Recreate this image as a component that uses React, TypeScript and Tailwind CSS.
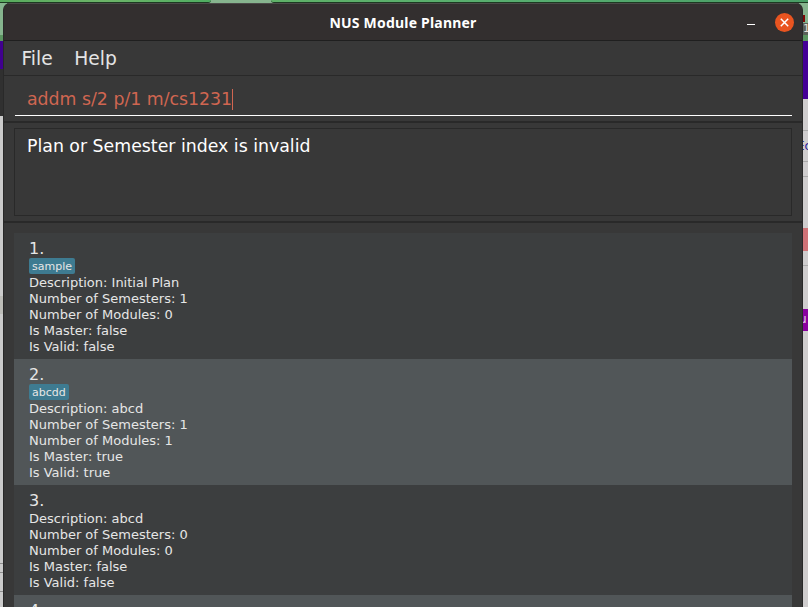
import React from 'react';

type Plan = { id: number; tag?: string; lines: string[] };

const plans: Plan[] = [
  {
    id: 1,
    tag: 'sample',
    lines: ['Description: Initial Plan', 'Number of Semesters: 1', 'Number of Modules: 0', 'Is Master: false', 'Is Valid: false'],
  },
  {
    id: 2,
    tag: 'abcdd',
    lines: ['Description: abcd', 'Number of Semesters: 1', 'Number of Modules: 1', 'Is Master: true', 'Is Valid: true'],
  },
  {
    id: 3,
    lines: ['Description: abcd', 'Number of Semesters: 0', 'Number of Modules: 0', 'Is Master: false', 'Is Valid: false'],
  },
  { id: 4, lines: [] },
];

/* Slivers of the desktop and browser visible around the window. */
function Backdrop() {
  return (
    <div className="absolute inset-0 flex flex-col overflow-hidden bg-[#86b48e]">
      <div className="flex h-[3px] shrink-0">
        <div className="h-[3px] w-[211px] rounded-br-[3px] border-b border-[#1d3a22] bg-gradient-to-r from-[#58ab5e] via-[#6cb468] to-[#4fae62]" />
        <div className="h-[3px] w-[60px] bg-[#86b48e]" />
        <div className="h-[3px] flex-1 rounded-bl-[3px] border-b border-[#1d3a22] bg-gradient-to-r from-[#5fb168] via-[#56ad70] to-[#4a9d66]" />
      </div>
      <div className="flex flex-1 justify-between">
        <div className="flex w-[8px] flex-col">
          <div className="h-[32px] bg-[#86b48e]" />
          <div className="h-[6px] bg-[#5b9460]" />
          <div className="h-[28px] bg-[#40008f]" />
          <div className="h-[47px] bg-[#303030]" />
          <div className="h-[180px] bg-[#cbcbcb]" />
          <div className="h-[18px] bg-[#bdbdb8]" />
          <div className="h-[250px] border-b border-[#8c8c8c] bg-[#cbcbcb]" />
          <div className="h-[9px] border-b border-[#8c8c8c] bg-[#cbcbcb]" />
          <div className="h-[19px] border-b border-[#8c8c8c] bg-[#cbcbcb]" />
          <div className="flex-1 bg-[#cbcbcb]" />
        </div>
        <div className="flex w-[8px] flex-col overflow-hidden pl-[3px] font-['DejaVu_Sans',sans-serif]">
          <div className="h-[12px] bg-[#86b48e]" />
          <div className="h-[7px] w-[2px] bg-[#7c0505]" />
          <div className="h-px" />
          <div className="h-[12px] overflow-hidden bg-[#5b6058] text-[11px] leading-[12px] text-[#e8e0d8]">1</div>
          <div className="h-[6px] bg-[#5b9460]" />
          <div className="h-[58px] bg-[#440096]" />
          <div className="h-[32px] border-b border-[#aaaaaa] bg-[#cfcdce]" />
          <div className="h-[31px] overflow-hidden border-b border-[#aaaaaa] bg-[#cfcdce] pt-[8px] text-[12px] leading-[14px] text-[#2a1a9a]">
            <span className="-ml-[6px]">Ec</span>
          </div>
          <div className="h-[15px] border-b border-[#aaaaaa] bg-[#cfcdce]" />
          <div className="h-[51px] bg-[#cfcdce]" />
          <div className="h-[23px] bg-[#d07378]" />
          <div className="h-[15px] border-b border-[#aaaaaa] bg-[#cfcdce]" />
          <div className="h-[43px] bg-[#cfcdce]" />
          <div className="h-[22px] overflow-hidden bg-[#8a00a0] text-[12px] leading-[21px] text-[#e6cdea]">
            <span className="-ml-[4px]">u</span>
          </div>
          <div className="flex-1 bg-[#cfcdce]" />
        </div>
      </div>
    </div>
  );
}

function TitleBar() {
  return (
    <header className="relative flex h-[38px] shrink-0 items-center justify-center border-t border-b border-t-[#4b4a48] border-b-[#1f1f1f] bg-[#332f2f]">
      <h1 className="pt-px font-['Noto_Sans','Open_Sans',sans-serif] text-[14px] leading-[20px] font-bold tracking-[0.2px] text-white">
        NUS Module Planner
      </h1>
      <div className="absolute top-0 right-[8px] flex h-[36px] items-center gap-[20px]">
        <span className="mt-[4px] h-px w-[8px] bg-white" />
        <span className="flex size-[19px] items-center justify-center rounded-full bg-[#e95420]">
          <svg width="9" height="9" viewBox="0 0 9 9" stroke="#fff" strokeWidth="1.5">
            <path d="M0.8 0.8 8.2 8.2M8.2 0.8 0.8 8.2" />
          </svg>
        </span>
      </div>
    </header>
  );
}

function PlanCard({ plan }: { plan: Plan }) {
  return (
    <li className="flex flex-col items-start px-[15px] pt-[6px] pb-[4px] odd:bg-[#3c3e3f] even:bg-[#515658]">
      <span className="text-[16px] leading-[19px]">{plan.id}.</span>
      {plan.tag && (
        <span className="h-[16px] rounded-[2px] bg-[#3e7b91] px-[3px] pt-[2px] text-[11px] leading-[14px]">{plan.tag}</span>
      )}
      <div className="flex flex-col pt-px text-[13px] leading-[16px]">
        {plan.lines.map((line) => (
          <span key={line}>{line}</span>
        ))}
      </div>
    </li>
  );
}

export default function App() {
  return (
    <div className="relative h-[607px] w-[808px] overflow-hidden">
      <Backdrop />
      <div className="relative mt-[3px] ml-[3px] flex h-[604px] w-[800px] flex-col overflow-hidden rounded-t-[7px] border-r border-l border-[#292929] bg-[#383838] font-['DejaVu_Sans',sans-serif]">
        <TitleBar />
        <nav className="flex h-[35px] shrink-0 items-center gap-[21.5px] border-b border-[#292929] pt-px pl-[17.5px] text-[18.67px] leading-[24px] text-[#e4e4e4]">
          <span>File</span>
          <span>Help</span>
        </nav>
        <div className="h-[47px] shrink-0 border-b-2 border-[#292929] pr-[10px] pl-[11px]">
          <div className="flex h-[40px] items-center border-b border-white pt-[7px] pl-[12px] text-[17.33px] leading-[20px] text-[#d06651]">
            <span>addm s/2 p/1 m/cs1231</span>
            <span className="h-[21px] w-px bg-[#d06651]" />
          </div>
        </div>
        <div className="h-[100px] shrink-0 border-b-2 border-[#292929] px-[10px] pt-[5px]">
          <div className="h-[88px] border border-[#292929] px-[12px] pt-[7px] text-[17.33px] leading-[20px] text-white">
            Plan or Semester index is invalid
          </div>
        </div>
        <ul className="mx-[10px] mt-[10px] text-[#e6e6e6]">
          {plans.map((plan) => (
            <PlanCard key={plan.id} plan={plan} />
          ))}
        </ul>
      </div>
    </div>
  );
}
